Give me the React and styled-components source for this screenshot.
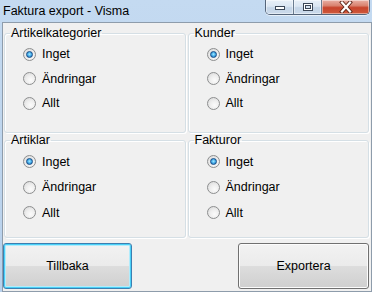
import React from "react";
import styled, { createGlobalStyle } from "styled-components";

const Global = createGlobalStyle`
  html, body { margin: 0; padding: 0; background: #f0f0f0; }
  body { font-family: "Liberation Sans", Arial, sans-serif; }
`;

const Window = styled.div`
  width: 372px;
  height: 292px;
  display: flex;
  flex-direction: column;
  overflow: hidden;
  background: linear-gradient(180deg, #c4daf1 0%, #bfd6ee 40%, #b8d1ec 100%);
  font-family: "Liberation Sans", Arial, sans-serif;
`;

const TitleBar = styled.div`
  height: 22px;
  display: flex;
  justify-content: space-between;
  align-items: flex-start;
  flex-shrink: 0;
`;

const Title = styled.div`
  padding-left: 3px;
  font-size: 12.5px;
  line-height: 22px;
  color: #000;
`;

const Controls = styled.div`
  display: flex;
  height: 14px;
  margin-right: 2px;
  border: 1px solid #55657a;
  border-top: none;
  border-radius: 0 0 5px 5px;
  overflow: hidden;
  box-shadow: 0 1px 0 rgba(255, 255, 255, 0.6);
`;

const CaptionButton = styled.div`
  width: ${(p) => p.$w}px;
  height: 100%;
  display: flex;
  align-items: center;
  justify-content: center;
  border-left: ${(p) => (p.$first ? "none" : "1px solid #6b7c90")};
  background: ${(p) =>
    p.$close
      ? "linear-gradient(180deg, #e9b1a6 0%, #d98370 40%, #c7442c 55%, #cf5a3c 100%)"
      : "linear-gradient(180deg, #e8eff7 0%, #dbe6f2 45%, #c5d5e7 55%, #cbdaeb 100%)"};
  box-shadow: inset 0 0 0 1px rgba(255, 255, 255, 0.45);
`;

const Body = styled.div`
  flex: 1;
  display: flex;
  padding-left: 2px;
  min-height: 0;
`;

const Client = styled.div`
  flex: 1;
  display: flex;
  flex-direction: column;
  background: #f0f0f0;
  border: 1px solid #8e9cab;
  padding: 3px 2px 1px 0;
`;

const Groups = styled.div`
  display: grid;
  grid-template-columns: 1fr 1fr;
  grid-template-rows: 107px 105px;
  column-gap: 2px;
  padding-left: 1px;
`;

const GroupBox = styled.fieldset`
  margin: 0;
  min-width: 0;
  padding: 1px 0 0 0;
  border: 1px solid #d5dfe5;
  border-radius: 3px;
  box-shadow: inset 1px 1px 0 #fff, 1px 1px 0 #fff;
`;

const Legend = styled.legend`
  margin-left: 5px;
  padding: 0 1px;
  font-size: 12.5px;
  line-height: 15px;
  color: #000;
`;

const RadioList = styled.div`
  display: flex;
  flex-direction: column;
  padding-left: 18px;
`;

const RadioRow = styled.label`
  display: flex;
  align-items: center;
  gap: 6px;
  height: ${(p) => p.$h}px;
  font-size: 12.5px;
  color: #000;
`;

const RadioCircle = styled.span`
  width: 13px;
  height: 13px;
  box-sizing: border-box;
  border-radius: 50%;
  border: 1px solid #8d8e8f;
  background: radial-gradient(circle at 60% 65%, #fbfbfb 0%, #eeeeee 45%, #d4d4d4 100%);
  display: flex;
  align-items: center;
  justify-content: center;
  flex-shrink: 0;
  &::after {
    content: "";
    display: ${(p) => (p.$checked ? "block" : "none")};
    width: 7px;
    height: 7px;
    box-sizing: border-box;
    border-radius: 50%;
    border: 1px solid #174d86;
    background: radial-gradient(circle at 50% 45%, #a7ebff 0%, #4bb2ec 45%, #1a6bb8 100%);
  }
`;

const ButtonRow = styled.div`
  display: flex;
  justify-content: space-between;
  margin-top: 5px;
  height: 46px;
`;

const DialogButton = styled.div`
  width: ${(p) => p.$w}px;
  box-sizing: border-box;
  display: flex;
  align-items: center;
  justify-content: center;
  font-size: 12.5px;
  color: #000;
  border-radius: 3px;
  border: 1px solid ${(p) => (p.$focused ? "#3c7fb1" : "#707070")};
  background: linear-gradient(180deg, #f2f2f2 0%, #ebebeb 50%, #dddddd 51%, #cfcfcf 100%);
  box-shadow: ${(p) =>
    p.$focused
      ? "inset 0 0 0 1px #48d0f7, inset 0 0 0 2px #b2ecfc"
      : "inset 0 0 0 1px #fcfcfc"};
`;

const GROUPS = [
  { title: "Artikelkategorier", row: 24.5 },
  { title: "Kunder", row: 24.5 },
  { title: "Artiklar", row: 25.5 },
  { title: "Fakturor", row: 25.5 },
];

const OPTIONS = ["Inget", "Ändringar", "Allt"];

function MinimizeGlyph() {
  return (
    <svg width="12" height="8" viewBox="0 0 12 8">
      <rect x="1.5" y="3.5" width="9" height="3" fill="#fff" stroke="#3b4656" />
    </svg>
  );
}

function MaximizeGlyph() {
  return (
    <svg width="12" height="10" viewBox="0 0 12 10">
      <rect x="1.5" y="1.5" width="9" height="7" fill="#fff" stroke="#3b4656" />
      <rect x="3.5" y="3.5" width="5" height="3" fill="#d6e2ef" stroke="#3b4656" />
    </svg>
  );
}

function CloseGlyph() {
  return (
    <svg width="14" height="12" viewBox="0 0 14 12">
      <path
        d="M3 1.5 L11 10.5 M11 1.5 L3 10.5"
        stroke="#5a2418"
        strokeWidth="4"
        strokeLinecap="square"
      />
      <path
        d="M3 1.5 L11 10.5 M11 1.5 L3 10.5"
        stroke="#fff"
        strokeWidth="2.2"
        strokeLinecap="square"
      />
    </svg>
  );
}

export default function App() {
  return (
    <>
      <Global />
      <Window>
        <TitleBar>
          <Title>Faktura export - Visma</Title>
          <Controls>
            <CaptionButton $w={27} $first>
              <MinimizeGlyph />
            </CaptionButton>
            <CaptionButton $w={27}>
              <MaximizeGlyph />
            </CaptionButton>
            <CaptionButton $w={47} $close>
              <CloseGlyph />
            </CaptionButton>
          </Controls>
        </TitleBar>
        <Body>
          <Client>
            <Groups>
              {GROUPS.map((g) => (
                <GroupBox key={g.title}>
                  <Legend>{g.title}</Legend>
                  <RadioList>
                    {OPTIONS.map((o, i) => (
                      <RadioRow key={o} $h={g.row}>
                        <RadioCircle $checked={i === 0} />
                        {o}
                      </RadioRow>
                    ))}
                  </RadioList>
                </GroupBox>
              ))}
            </Groups>
            <ButtonRow>
              <DialogButton $w={129} $focused>
                Tillbaka
              </DialogButton>
              <DialogButton $w={131}>Exportera</DialogButton>
            </ButtonRow>
          </Client>
        </Body>
      </Window>
    </>
  );
}
